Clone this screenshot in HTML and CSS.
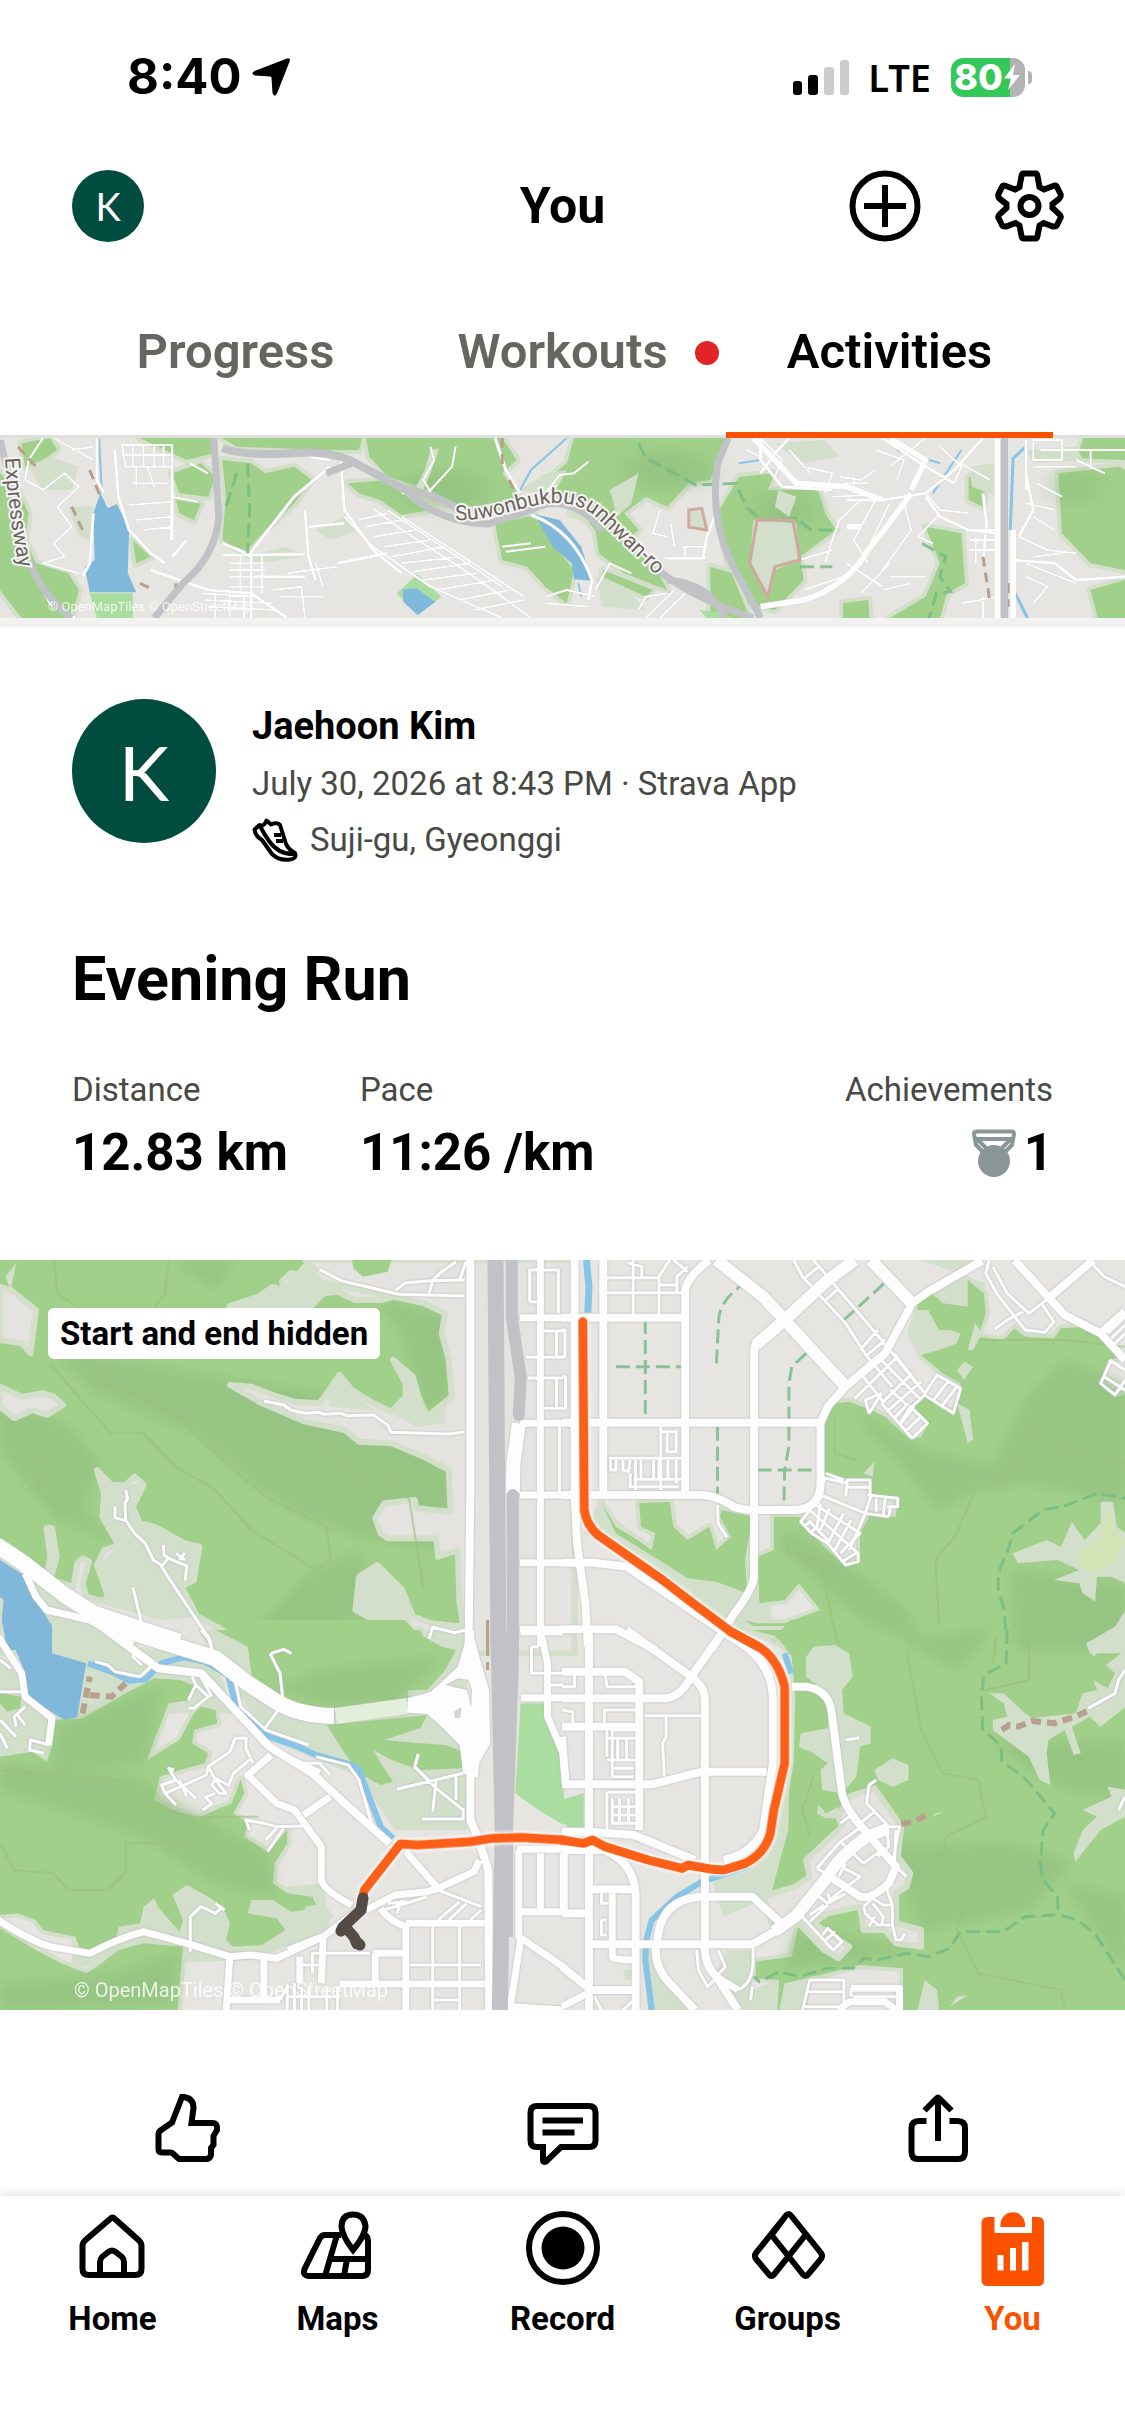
FILE: index.html
```html
<!DOCTYPE html>
<html lang="en">
<head>
    <meta charset="UTF-8">
    <meta name="viewport" content="width=device-width, initial-scale=1">
    <title>You</title>
    <link rel="stylesheet" href="styles.css">
</head>
<body>
<div class="status-bar">
    <div class="status-left">
        <span class="time">8:40</span>
        <svg class="location" viewBox="0 0 40 40"><path d="M36 1.500Q39.500 .5 38.800 4L26 36.500Q23.500 41 21.500 36L20.500 20.500Q20 19.500 19 19.500L4 18.500Q-1 17 3.500 14Z"/></svg>
    </div>
    <div class="status-right">
        <svg class="signal" viewBox="0 0 57 36">
            <rect x="0" y="22" width="9" height="14" rx="3"/>
            <rect x="15" y="16" width="10" height="20" rx="3"/>
            <rect class="off" x="31" y="8" width="10" height="28" rx="3"/>
            <rect class="off" x="47" y="1" width="9" height="35" rx="3"/>
        </svg>
        <span class="network">LTE</span>
        <div class="battery">
            <span>80</span>
            <svg viewBox="0 0 18 26"><path d="M12 0L1 14.500H8L5 26L17 11H10Z"/></svg>
        </div>
    </div>
</div>

<header class="top">
    <a class="avatar small" href="#">K</a>
    <h1>You</h1>
    <div class="top-actions">
        <button type="button" aria-label="Add">
            <svg class="icon" viewBox="0 0 72 72"><circle cx="36" cy="36" r="32.500"/><path d="M36 15V57M15 36H57"/></svg>
        </button>
        <button type="button" aria-label="Settings">
            <svg class="icon" viewBox="0 0 72 72">
                <path d="M30 3.500H43Q44 3.500 44.500 6L46.500 17L51 19.500L60 16Q63 15 64 17L67.500 24Q68.500 26.500 66 29L59.500 34V38L66 44Q68.500 46 67.500 48L64 55Q63 57 60 56.500L50.500 53L46.500 55.500L44.500 66Q44 68.500 43 68.500H30Q29 68.500 28.500 66L26.500 55.500L22.500 53L13 56.500Q10 57 9 55L5.500 48Q4.500 46 7 44L13.500 38V34L7 29Q4.500 27 5.500 24L9 17Q10 15 13 16L22 19.500L26.500 17L28.500 6Q29 3.500 30 3.500Z"/>
                <circle cx="36.500" cy="36" r="9"/>
            </svg>
        </button>
    </div>
</header>

<nav class="tabs">
    <a href="#">Progress</a>
    <a href="#"><span class="tab-label">Workouts<i class="dot"></i></span></a>
    <a class="active" href="#">Activities</a>
</nav>

<main>
    <!-- end of the previous activity -->
    <section class="map">
        <svg viewBox="0 0 1125 180" preserveAspectRatio="xMidYMid slice">
            <rect class="ground" width="1125" height="180"/>
            <g transform="translate(0 -8) scale(.7175 .3333)">
                <g class="forest">
                    <path d="M0 130L25 180 40 250 35 330 50 400 95 430 110 480 100 564H30L0 480Z"/>
                    <path d="M30 40L70 24 80 60 60 90 35 110Z"/>
                    <path d="M195 24H298V70L260 90 230 60Z"/>
                    <path d="M240 130L280 100 300 140 290 200 250 190ZM245 210L280 220 270 270 250 250Z"/>
                    <path d="M310 90L350 100 370 130 410 110 435 150 410 220 370 300 340 370 310 330 315 200Z"/>
                    <path d="M310 24H505L500 60 450 60 330 50Z"/>
                    <path d="M510 24H700L720 90 700 130 722 190 705 240 650 235 600 180 540 140 515 80Z"/>
                    <path d="M800 24H1010L1000 90 990 150 960 160 930 230 900 200 870 250 890 300 870 340 910 400 930 480 870 430 835 370 830 300 800 230 750 170 790 100Z"/>
                    <path d="M485 160L540 150 560 190 600 240 560 255 530 210 500 190Z"/>
                    <path d="M690 280L745 255 770 340 800 420 790 520 760 470 735 410 700 390Z"/>
                    <path d="M1030 140L1080 130 1070 180 1140 180 1150 250 1165 300 1115 380 1120 450 1080 540 1040 520 1015 400 1000 250Z"/>
                    <path d="M990 410L1020 430 1045 564H990Z"/>
                    <path d="M1290 290L1340 310 1345 460 1320 490 1310 564H1240L1290 500 1310 400Z"/>
                    <path d="M1475 130L1560 110 1568 120V420L1520 400 1480 310Z"/>
                    <path d="M1510 24H1568V90L1500 85Z"/>
                    <path d="M1175 520L1210 510 1212 564H1175ZM1350 140L1375 135 1370 230 1350 210ZM1520 480L1568 450V564H1530ZM185 330L210 380 190 400Z"/>
                    <path d="M840 420L910 480 900 500 840 440Z"/>
                </g>
                <g class="shade">
                    <ellipse cx="620" cy="180" rx="60" ry="60"/>
                    <ellipse cx="930" cy="120" rx="60" ry="60"/>
                    <ellipse cx="1090" cy="240" rx="40" ry="60"/>
                    <ellipse cx="1500" cy="170" rx="30" ry="50"/>
                </g>
                <path class="pale" d="M1050 270L1110 280 1112 390 1080 420 1070 500 1045 400ZM960 240L980 235 985 300 960 290ZM790 200L830 240 825 280 790 260ZM850 180L890 130 880 220 860 260ZM600 60L612 55 600 130 590 180 580 170 592 120ZM725 180L760 130 790 120 770 200ZM1085 180L1110 200 1100 260 1080 230ZM40 110L70 80 110 110 100 180 60 180ZM95 230L130 230 125 330 110 320Z"/>
                <path class="pale" d="M340 380L400 350 420 380 360 400ZM440 300L480 260 500 300 460 330ZM1080 40L1150 30 1170 80 1120 100ZM1350 110L1390 100V200L1355 170ZM1430 60L1500 50 1510 90 1440 100ZM830 440L870 470 900 540 840 530Z"/>
                <path class="grove" d="M582 432L615 500 582 556 553 490ZM125 490H185V564H135ZM975 540L1010 550 1020 564H985Z"/>
                <g class="lake">
                    <path d="M140 190L150 235 163 222 180 300 178 430 190 487H125L118 410 132 390 130 250Z"/>
                    <path d="M745 253L780 270 810 350 825 452 800 448 797 400 770 350Z"/>
                    <path d="M562 478L580 475 607 515 582 555 562 515Z"/>
                </g>
                <path class="stream w2" d="M138 24L142 190M790 24L740 120 725 180 720 200M806 460L810 500M1030 100L1060 90M1250 60L1310 100M1340 60L1300 190"/>
                <path class="stream w4" d="M1432 45L1412 85 1408 300M1408 460L1432 564"/>
                <g class="road">
                    <path class="w2" d="M60 24L40 90 35 150 60 180 90 130 110 170 80 230 100 290 75 340 90 380 60 400 110 430M75 24L130 90M100 60L130 50M170 45H240V110H175ZM185 45V110M200 45V110M215 45V110M228 45V110M170 75H240M190 110V170M205 110L215 170M185 160H235M180 225L240 215M190 270L240 260M240 110L238 330M200 300L240 290M265 100L290 130M240 200L275 215M600 50L605 90 590 150 600 185 560 190M635 50L630 110 600 180M820 95L800 130 780 135 760 190M310 375H420M320 400H370M320 420H370M320 440H370M320 470H370M335 375V480M350 375V564M365 375V490M280 490L360 500M285 510L380 520M290 530L385 540M300 490V564M320 490V564M340 490V564M380 480L420 470 425 564M390 500H450M400 430L470 410M440 400L450 470M480 260L520 350 600 470 700 564M520 235L560 300 640 410 700 500 740 564M500 270L540 250M510 290L560 270M520 320L580 300M535 350L600 330M545 380L620 350M560 400L640 380M575 425L655 400M590 450L665 430M610 480L690 450M640 510L710 480M660 540L730 510M540 240L700 470M560 260L730 500M700 350L740 340M705 365L760 350M760 500L790 480 830 500M760 520L820 530M830 480L850 400 880 430M890 540L900 500 930 490M900 564L940 480M920 564L955 490M920 240L910 310 930 320M935 280L940 350M925 385H985M950 350H985M955 350V385M1060 24L1090 90 1080 140M1040 60L1060 80M1100 60L1130 130M1120 110L1160 130 1150 190M1170 140L1200 150 1220 120M1175 160H1210M1190 140V190M1200 210L1170 270 1160 330 1150 400M1220 210L1190 330 1210 400M1240 220L1200 400M1290 190L1310 240 1350 250M1310 250L1280 320 1300 340M1260 220L1270 300 1230 420M1160 200L1210 195M1220 60L1260 90 1250 150M1290 24L1240 110M1310 50L1340 110 1330 160M1330 90L1380 150M1350 300H1390M1350 330H1390M1350 360H1390M1360 320V400M1440 30H1480V90H1440ZM1450 60H1568M1440 110H1500M1500 90L1540 130M1520 60V110M1445 160L1480 200M1430 220L1470 240M1440 260L1470 300M1420 320L1460 360 1500 370M1440 380L1480 370M1430 400L1500 460M1430 440L1460 470 1440 520M1370 500V564M1340 520L1390 500M1240 440L1290 440M1230 480L1270 460M1120 480L1190 430M1100 400L1160 360M1180 400L1230 470M1240 400L1200 490"/>
                    <path class="w4" d="M135 24V150L145 190M160 60L165 200 180 300 210 370 230 400M105 564L70 520 60 480M130 250L125 400 115 440M240 130V330M240 380L260 330M210 420L290 480 350 490 400 564M475 90L480 240 520 360 560 430M345 375L425 372M345 380L410 200 460 110M310 340L350 375V564M355 440H425M425 240L430 380 440 450M430 290L480 280M470 400L540 370M690 24L705 120 725 190M460 90L430 80M740 255Q800 300 825 450L820 510M930 385H980L985 320 1000 240M1100 24L1080 70 1060 130M1060 24L1060 90 1090 170 1160 180M1180 210L1230 210 1290 190 1330 120 1370 24M1230 24L1290 110 1330 160M1290 200L1310 260 1350 300 1390 310M1420 320L1440 240 1430 130M1410 390L1470 400 1500 450 1568 440M1430 30V180M1370 190L1375 280 1370 400"/>
                    <path class="w6" d="M1050 24L1080 90 1110 160 1180 170 1230 210M1270 190Q1240 280 1210 360Q1180 470 1120 510L1060 530M1180 290L1200 290M1240 24L1290 90 1270 180M1390 24V564M1412 300V564"/>
                </g>
                <path class="trail" d="M890 40L900 85 940 130 970 165 1025 160 1040 230 1060 270 1110 265 1130 300 1165 300M345 100L348 240 345 370M1285 340L1318 380 1310 440 1325 485 1305 490 1295 564M330 130L315 230M1115 410L1160 410"/>
                <path class="border" d="M1055 270L1105 270 1115 390 1080 410 1070 500 1045 400ZM960 240L978 235 985 300 960 292Z"/>
                <path class="dirt" d="M125 120L140 200M100 230L115 300M700 24V120M710 150L720 200M1370 380L1380 520M195 460L215 480M245 460V480M1405 460V530M25 50L50 110"/>
                <g class="motorway">
                    <path class="w8" d="M298 24L305 260Q300 380 255 460L215 564"/>
                    <path class="w10" d="M310 55Q340 80 420 68Q470 65 500 105L570 185"/>
                    <path class="w8" d="M455 130L490 100M568 185Q600 185 640 240M570 195Q620 280 680 282L740 240Q790 180 840 300"/>
                    <path class="w8" d="M915 415Q960 500 1050 564M930 450Q990 460 1010 564"/>
                    <path class="w8" d="M1015 24L1000 100Q990 250 1015 380L1060 564M40 390Q60 500 100 564M0 30L35 340"/>
                    <path class="w8" d="M1400 24V564"/>
                </g>
            </g>
            <path id="ring-road" d="M455 82C490 83 512 72 538 67C572 60 590 72 603 86L670 150" fill="none"/>
            <path id="expressway" d="M5 20Q8 75 20 135" fill="none"/>
            <text class="road-name"><textPath href="#ring-road">Suwonbukbusunhwan-ro</textPath></text>
            <text class="road-name"><textPath href="#expressway">Expressway</textPath></text>
        </svg>
        <small class="credit tiny">© OpenMapTiles © OpenStreetMap</small>
    </section>

    <article class="activity">
        <div class="athlete">
            <a class="avatar" href="#">K</a>
            <div class="athlete-info">
                <h2>Jaehoon Kim</h2>
                <p>July 30, 2026 at 8:43 PM · Strava App</p>
                <p class="place">
                    <svg class="shoe" viewBox="0 0 46 44">
                        <path d="M2.500 11.500L7.500 7Q12 9 14.500 2.500L19 6.500Q25 4 28 7L34 26Q37 32 43 35Q45 41 38 41.500Q27 43 20 36L10 22Q3 18 2.500 11.500Z"/>
                        <path d="M8 8Q12 16 17 23Q27 37 43 36M22 17H29M24 23H31"/>
                    </svg>
                    Suji-gu, Gyeonggi
                </p>
            </div>
        </div>
        <h3>Evening Run</h3>
        <dl class="stats">
            <div>
                <dt>Distance</dt>
                <dd>12.83 km</dd>
            </div>
            <div>
                <dt>Pace</dt>
                <dd>11:26 /km</dd>
            </div>
            <div class="achievements">
                <dt>Achievements</dt>
                <dd>
                    <svg class="medal" viewBox="0 0 44 48">
                        <path d="M4 2.500H40Q42 3 42 5L40 16L31 25M4 2.500Q2 3 2 5L4 16L13 25M3 10H41M6 11L17 22M38 11L27 22"/>
                        <circle cx="22" cy="32" r="16"/>
                    </svg>
                    1
                </dd>
            </div>
        </dl>
    </article>

    <section class="map">
        <svg viewBox="0 0 1125 750">
            <rect class="ground" width="1125" height="750"/>

            <!-- land cover, one group per tile -->
            <g transform="translate(0 -10) scale(.35906 .33333)">
                <rect class="wood" width="1568" height="1150"/>
                <g class="shade">
                    <path d="M150 300L600 380 900 430 1250 600 1250 900 1000 860 850 800 700 700 560 560 250 420Z"/>
                    <path d="M0 470L180 520 280 640 230 780 330 880 150 800 0 600Z"/>
                    <path d="M480 30L650 30 600 120Z"/>
                    <path d="M1050 150L1250 200 1250 450 1180 480 1120 250Z"/>
                    <path d="M850 980L1000 900 1050 1100 900 1150 700 1150Z"/>
                </g>
                <g class="town">
                    <path d="M850 30L880 60 850 75 810 70 785 95 795 125 760 110 720 140 640 168 830 170 870 165 900 130 940 125 990 150 1060 150 1100 140 1180 160 1240 190 1230 250 1250 330 1258 440 1190 500 1165 440 1150 380 1095 330 1130 400 1130 440 1090 485 1040 460 980 420 945 375 910 430 890 460 820 455 760 435 700 410 640 405 730 460 850 515 960 540 1000 575 1090 580 1180 620 1250 660 1255 785 1160 775 1155 750 1070 760 1045 805 1060 850 1080 865 1215 865 1220 920 1275 900 1280 1060 1290 1130 1200 1120 1150 1100 1120 1020 1050 945 1000 980 990 1080 1040 1110 1150 1150 1200 1210H1600V30Z"/>
                    <path d="M0 110L30 120 100 180 85 310 60 280 0 270Z"/>
                    <path d="M0 410L60 440 120 430 150 440 175 465 130 495 90 480 40 505 0 470Z"/>
                    <path d="M270 660L310 705 350 705 375 680 400 705 370 770 390 820 430 830 515 880 555 890 540 990 505 1010 550 1100 640 1150 700 1210H0V930L80 970 130 980 140 920 130 835 145 835 158 920 140 990 205 1010 215 940 230 925 248 935 230 1000 240 1040 290 1055 300 1035 270 945 290 900 330 885 285 800 290 730Z"/>
                </g>
                <path class="pale" d="M1050 950L1000 985 995 1080 1040 1105 1150 1145 1140 1090 1110 1020ZM945 380L910 440 920 470 1040 480 980 425ZM850 35L790 110 640 165 830 165 960 120 1240 180 1100 130 900 90ZM1100 335L1140 400 1130 460 1090 490 1160 530 1240 520 1240 460 1190 500 1160 390Z"/>
                <path class="pale" d="M280 670L310 710 395 700 375 770 390 820 550 890 540 990 505 1010 550 1100 450 1110 240 1050 300 1040 280 940 335 885 290 800ZM45 40L15 80 30 120ZM70 980L240 1080 400 1140 380 1200 150 1200Z"/>
                <path class="wood" d="M980 30H1090L1080 65 1010 80 985 55Z"/>
            </g>
            <g transform="translate(0 370) scale(.35906 .33333)">
                <path class="pale" d="M550 0H1300V600H1100L1000 440 750 330 640 150ZM0 80L70 130 140 260 150 400 0 400ZM140 20L600 80 650 250 400 250 150 270ZM200 780L560 740 700 780 900 760 920 900 700 990 200 1010Z"/>
                <g class="forest">
                    <path d="M600 0L690 50 705 170 760 210 860 225 930 240 1140 215 1135 180 1190 180 1240 120 1270 60 1230 50 1180 20 1170 0Z"/>
                    <path d="M910 285L1190 255 1170 295 1070 330 1170 340 1240 345 1290 365V415L1170 420 1090 390 1040 360 1060 400 1095 455 1060 465 1000 430 960 370Z"/>
                    <path d="M0 380L90 365 130 395 145 350 140 270 230 265 350 190 430 145 500 150 550 170 530 210 470 220 430 330 410 390 500 330 540 250 560 230 600 240 605 280 540 300 535 340 580 370 570 400 500 420 445 440 430 510 480 540 550 565 600 540 645 520 670 450 680 490 650 550 690 580 680 620 745 665 800 600V640L765 700 760 760 800 790 870 800 885 835 810 845 760 810 700 810 690 850 770 865 795 900 730 945 650 950 630 930 640 880 620 830 580 800 520 765 480 795 510 870 500 905 440 830 430 805 400 830 390 880 330 890 325 920 250 960 220 950 210 920 120 900 100 870 50 850 0 855Z"/>
                    <path d="M0 895L100 960 170 1000 240 1030 270 1010 330 960 400 940 510 950 500 1060 495 1140H0Z"/>
                    <path d="M0 190L60 200 55 235 20 245 0 220Z"/>
                </g>
                <g class="shade">
                    <path d="M0 400L380 440 620 600 750 680 760 800 600 760 400 620 150 530 0 480Z"/>
                    <path d="M0 1060L300 1040 500 960 480 1120 0 1140Z"/>
                    <path d="M150 300L450 170 400 400 150 420Z"/>
                    <path d="M760 180L900 120 1230 80 1100 220 900 220Z"/>
                </g>
                <path class="pale" d="M850 830L900 820 930 860 890 900 850 890ZM500 800L530 770 570 830 540 860Z"/>
                <path class="grove" d="M1450 220H1515L1520 270 1570 380V585L1500 540 1435 490Z"/>
            </g>
            <g transform="translate(562 -10) scale(.35906 .33333)">
                <path class="pale" d="M1000 30H1150L1000 130 960 250 1000 330 1120 400 1160 300 1180 100ZM60 850L500 1150 600 1180 560 960 250 900 100 760Z"/>
                <g class="forest">
                    <path d="M730 520L760 460 800 455 860 480 900 500 970 570 1000 560 1020 520 980 470 1010 440 1090 490 1110 440V400L1060 370 1000 315 1050 300 1100 280 1110 250 1080 240 1050 240 1020 180 990 180 990 160 1030 130 1060 160 1130 170V90L1175 130 1180 190 1160 260 1230 270 1260 235 1290 260 1370 265 1390 235 1470 230 1520 270 1560 320 1520 330 1500 400 1550 440 1570 430V1205H650L570 1160 510 1110 540 1120 620 1120 720 1080 690 1040 660 1000 620 1050 550 1060 545 920 590 900V800H660L730 890 790 950 830 920V850L860 790 930 800 935 750 860 730V690L730 680Z"/>
                    <path d="M110 760L150 830 210 870 250 900 260 850 220 830 215 760 300 755 310 830 350 870 410 830 430 900 470 860 440 800 445 780 530 800 510 930 515 1030 430 995 350 985 270 930 150 850Z"/>
                </g>
            </g>
            <g transform="translate(562 370) scale(.35906 .33333)">
                <g class="forest">
                    <path d="M530 0L600 20 640 80 650 200 645 400 630 500 630 600 600 680 580 740 575 800 620 770 660 880 640 980 540 995 540 1045 605 1050 600 1140H665L690 1040 720 1035 830 1005 950 1015V1140H1570V0Z"/>
                </g>
            </g>
            <!-- join the woods across the tile edge -->
            <path class="wood" d="M212 360H405L424 382H246ZM790 360H1125V390H797L775 378Z"/>
            <g transform="translate(562 -10) scale(.35906 .33333)">
                <g class="shade">
                    <path d="M800 470L1000 600 1200 650 1290 450 1400 330 1568 400V760L1300 700 1150 720 1050 780 950 650Z"/>
                    <path d="M620 840L760 920 960 1080 1000 1180 850 1120 700 980 620 900Z"/>
                    <path d="M1250 960L1568 1000V1200H1260Z"/>
                </g>
                <path class="pale" d="M1255 910L1350 870 1390 890 1420 815 1455 870 1500 820V755H1535L1545 830 1570 850V1000L1530 980 1490 980 1485 1055 1450 1030 1440 1000 1370 990 1440 960 1380 930 1270 940ZM1570 1080L1540 1130 1460 1180 1470 1210H1570ZM1130 300L1150 220 1170 250 1145 300ZM1100 360L1120 335 1145 350 1120 390ZM1100 460L1135 480 1145 570 1130 580ZM840 670L870 635 865 680Z"/>
                <path class="meadow" d="M1440 900L1500 870 1510 790 1530 780 1540 850 1570 870 1540 940 1480 970 1440 950Z"/>
            </g>
            <g transform="translate(562 370) scale(.35906 .33333)">
                <g class="shade">
                    <path d="M850 650L1250 640 1420 700 1300 840 1000 900 960 780Z"/>
                    <path d="M1200 340L1568 330V500L1400 480Z"/>
                    <path d="M650 900L1000 960 800 990 620 1020Z"/>
                    <path d="M1400 760L1568 800V1030L1500 920Z"/>
                    <path d="M950 30L1200 0 1100 120Z"/>
                </g>
                <g class="town">
                    <path d="M720 650L780 590 770 560 800 500 870 475 900 520 945 590 935 680 970 730 960 770 930 790V880L1000 900V950L930 940 900 900 840 900 830 830 740 850 700 880 800 950 770 985 730 960 660 880 590 900 560 800 650 770 690 740 680 690Z"/>
                </g>
                <path class="pale" d="M680 80L700 50 760 45 800 70 810 140 780 180 785 250 860 290V340L830 350 820 440 780 490 725 480 720 420 740 400 700 370 660 350 665 310 740 295 750 200 680 140ZM870 420L920 385 965 405V450L920 470 880 450ZM715 525L735 550 770 530V565L735 565 710 550ZM640 80L630 600 600 720 580 800 450 860 420 760 560 660 610 500ZM1040 550L1065 545 1030 560ZM620 1060L700 1040 680 1140H605ZM1010 1050L1045 1080 1050 1140H990ZM1080 1130L1100 1100 1130 1095Z"/>
                <path class="pale" d="M1190 190H1230L1290 250 1310 265 1430 250 1450 190 1490 180 1480 150 1520 175 1540 130 1515 105 1570 60V230L1500 290 1470 260 1420 290 1445 370 1425 375 1400 300 1355 330 1350 370 1360 465 1330 450 1300 380 1250 340 1200 300V270L1240 260 1230 220ZM1450 540L1530 500 1520 470 1570 480V560L1500 600 1430 695 1425 670 1450 600 1490 560ZM1460 40L1550 0H1568L1480 80Z"/>
                <path class="pale" d="M460 960L530 960 530 1080 600 1050V1140H500L420 1050ZM170 1020H200V1050H175ZM220 960L260 960 300 1070 370 1140H240Z"/>
                <path class="grove" d="M-4 510L60 490V600H30L-4 575Z"/>
            </g>

            <!-- water -->
            <g transform="translate(0 -10) scale(.35906 .33333)">
                <path class="lake" d="M0 930L65 975 145 1130V1200H20L5 1110 10 1050 0 1040Z"/>
            </g>
            <g transform="translate(0 370) scale(.35906 .33333)">
                <path class="lake" d="M18 -20H143L145 70 240 100 215 262 180 270 75 200 70 130 40 50Z"/>
                <path class="stream w6" d="M245 100L310 125 360 152 405 148 450 100 510 82 570 95 635 135 660 240 750 320 830 350 880 375 980 405 1000 420 1060 590 1095 625"/>
            </g>
            <g transform="translate(562 -10) scale(.35906 .33333)">
                <path class="stream w8" d="M68 30L75 110 72 188"/>
            </g>
            <g transform="translate(562 370) scale(.35906 .33333)">
                <path class="stream w6" d="M250 1140L232 990 235 930 250 870 320 800 390 755 520 710M620 70L638 130"/>
            </g>

            <!-- footpaths and tracks -->
            <g transform="translate(562 -10) scale(.35906 .33333)">
                <path class="trail" d="M232 210V515M150 350H335M430 340L437 200Q445 150 495 110M680 310L640 350 632 400V590L620 660 618 770M433 530V735M545 660H710M785 210L900 97M1235 1140L1232 1080 1215 1020V970L1245 890 1255 850 1340 780 1400 768 1490 730 1568 745"/>
                <path class="contour" d="M760 500V610L820 630M1330 470L1290 600 1230 690 1150 720 1100 850 1040 930 1050 1130M1360 470L1370 560 1440 610 1568 640M620 850L630 910 720 930 750 1100 770 1180M1160 270L1400 270 1568 290"/>
            </g>
            <g transform="translate(562 370) scale(.35906 .33333)">
                <path class="trail" d="M1240 0L1237 100 1175 135 1168 200 1172 300 1222 345 1225 395 1285 440 1372 550 1340 600 1332 700 1340 750 1380 800 1382 855M1568 1050L1490 920Q1440 860 1380 855L1290 860 1230 905H1110L1080 955 1020 980 960 970 880 990 840 985 810 1015H740L660 1040 605 1025 550 1055 535 1040"/>
                <path class="dirt thick" d="M1225 300L1245 285 1270 290 1310 273 1370 280 1430 260 1468 240M945 582L980 575 1015 555"/>
                <path class="contour" d="M960 60L1000 300 1060 430 1160 450 1180 560 1070 620 1060 700 1140 790 1100 900 1160 1030 1390 1080 1400 1140M700 440L670 540 690 620M1210 20L1200 100M1300 30V150L1180 180"/>
            </g>
            <g transform="translate(0 -10) scale(.35906 .33333)">
                <path class="contour" d="M150 30L160 130 240 190 210 270M470 30L460 130 430 170M140 340L250 480 310 550 400 550 490 650 600 720 700 840 880 960 920 930 910 830 740 740 630 640 540 550 500 500 380 430 300 410 280 340M150 620L100 720 70 690 90 620 150 620M700 470L800 550 920 590 1000 690 1100 690 1140 750 1180 1020"/>
                <path class="dirt" d="M1358 1110V1200"/>
            </g>
            <g transform="translate(0 370) scale(.35906 .33333)">
                <path class="contour" d="M0 420L330 450 380 520 540 560 720 560M0 640L40 720 150 730 190 780 300 780 350 730V640L540 640 545 610"/>
                <path class="dirt thick" d="M230 250L250 140M250 195L310 200 350 160"/>
                <path class="dirt" d="M1358 0V120"/>
            </g>

            <!-- streets -->
            <g class="road">
                <g transform="translate(0 -10) scale(.35906 .33333)">
                    <path class="w4" d="M890 58L950 92 1050 118 1110 133 1295 138M1100 122L1130 98 1200 92 1295 90M1195 130L1205 92 1230 65 1270 35M1280 90L1298 35M735 453L790 465 810 480 850 490 890 487 900 493 950 490 965 497 1040 495 1080 525 1090 547 1250 552 1295 545M350 720L355 745 348 760 350 810 375 850 405 880 427 930 445 942 480 1000 560 1130 580 1160 590 1200M320 770V803L350 812M455 885L457 915 470 925 520 948 516 992M450 950L470 922M490 910L515 930M515 908L500 930M370 1012L392 1110 388 1135M1195 1167L1205 1132 1265 1148 1300 1140M1475 155V60H1555V190M1475 155H1495M1510 243H1568M1465 322H1568M1470 384H1568M1515 475H1568M1550 243V320M1550 384V475M1558 520V740"/>
                    <path class="w8" d="M1505 30V1190M1448 203H1568M1448 520H1568M1448 735H1568M1448 938H1568M1448 1138H1568M70 970L100 1040 130 1080 250 1110 370 1185"/>
                    <path class="w10" d="M1310 30V700L1305 1190"/>
                    <path class="w16" d="M-10 885L60 935 180 1035 260 1090 400 1140 500 1175"/>
                    <path class="w14" d="M1445 520L1430 640 1428 730"/>
                </g>
                <g transform="translate(562 -10) scale(.35906 .33333)">
                    <path class="w4" d="M125 83H270M125 128H335M198 30V200M182 38L222 50V80M270 203V80L300 30M270 105H320M320 125V80L350 50M310 30L350 65M0 240H8V320H-10M0 380H10V475H0M645 30L670 80 790 220 850 320 920 410M700 30L890 270 1010 430M675 85L715 50M735 150L770 115M830 300L880 240M845 320L900 270M815 445L935 320M855 490L845 450 890 430M890 430L855 490M890 460L975 370M905 485L1000 395M940 525L980 470M975 565L1018 520 970 470 940 525M1010 430L1045 375 1110 415 1090 490 1010 435 970 475M890 460L975 565M835 375L895 455M880 320L1000 450M915 420L960 465M1060 465L1100 410M1035 450L1075 395M925 310L1010 430M925 505L965 460M955 545L1000 500M1190 30L1180 70 1210 130 1290 240 1345 247 1370 215 1335 160M1200 50L1240 130 1300 190 1355 145M1205 237L1240 210 1285 185M1480 45L1510 80 1568 110M1520 250L1568 200M1530 265L1568 225M1540 280L1568 250M1530 330L1500 400 1540 435 1568 390M1525 330L1568 360M1510 380L1568 420M130 625H335M275 530V720M275 545H318V605H293V550M135 630V660H150V630M170 630V660L185 665 190 630M205 630V720M220 630V685M255 630V685M270 630V685M295 630V685M318 630V700M190 670V710H325M200 688H335M433 765L435 820 460 862"/>
                    <path class="w4" d="M735 670L785 690M735 685L795 700M790 690H858V735M795 712H858M795 690L790 740M735 680L690 780 665 815 695 850 740 880 790 945 825 935 825 910M690 780L825 910M720 735L845 790 910 800M850 735L935 745V770L905 770M860 740L845 790 800 900M875 745V785M900 745L895 795M915 770L910 800M715 850L745 775M740 880L785 790M775 910L830 850 805 830M675 830L690 815 740 870M700 760L830 850M710 835L720 760M760 900L805 810M690 850L710 830M780 935L825 905"/>
                    <path class="w10" d="M35 30V740L42 880 65 1060 72 1190M115 30V735M0 203H340M0 518H725M0 735H390Q430 735 480 772L520 780H650Q720 775 720 700V520L740 470 790 410 900 310 975 160 1020 125 1170 32M343 735V120Q350 80 410 30M535 320V980Q530 1020 480 1090L415 1200M540 280Q535 290 535 320M0 938H90L180 950 470 1160M0 1138H150L260 1200M1260 30L1400 195 1500 250 1568 330M1355 145L1480 30M1500 250L1568 185"/>
                    <path class="w12" d="M430 30L560 140 620 210 790 410M815 30L730 100 650 180 620 210 540 285M860 30L975 160"/>
                </g>
                <g transform="translate(0 370) scale(.35906 .33333)">
                    <path class="w4" d="M1205 890V1140M1280 890V1140M1140 1005H1340M1205 1110H1280M840 1005H895M800 955L895 915M870 1030V970H1030M800 1060V1140M820 1060V1140M840 1070V1140M860 1070V1140M910 1070V1140M940 1070V1140M800 1100H945M780 1110L800 1070M530 965V860L560 830 600 850 620 830M600 820L625 840M1220 870L1280 815M1250 870L1300 820M1310 870L1340 840M1220 780L1340 830M1070 840L1190 800M1080 820L1150 815M1105 850L1120 810M755 70L790 58 812 70M752 70L780 130 788 210M735 300L775 240M655 150L670 230 740 300 860 345M560 0L585 30 595 80M265 95L300 105 320 125 390 140 430 100M375 50L370 80 395 105M535 140L545 165 525 210M545 165L580 200 540 235 525 235M560 140L590 200M880 380L970 405 1000 450 1040 600M830 400H890L920 435M690 325H655L640 365 580 410 575 435 545 450 460 490 450 465 490 450 470 415 485 420M460 490L490 525M490 450L545 505M500 450L520 500M580 410L600 450 630 490 610 490 590 465 600 445 635 465M700 385L650 430 635 470M685 325V355L705 400M570 500L590 520 565 540M575 500L600 490M695 600L685 570 735 580 770 590 845 588M745 665L790 595M740 630L770 595M1105 478L1290 430M1165 372L1155 410 1215 475 1290 540M1215 450L1205 545M1270 440V510M1175 567H1290V535M138 345L85 330 82 360 122 370M0 270L45 320M0 310L20 355M45 250L70 285M70 230L40 260 45 290M0 90L30 115M0 185H60M1480 50V130H1568M1480 50H1500M1530 165H1568"/>
                    <path class="w8" d="M-5 20L60 130 70 200 145 265 135 345M755 375L690 435 770 520 820 540 895 650V750Q900 780 980 825M845 555L920 500M-5 870Q80 930 140 950L250 970Q330 925 400 905L520 940 640 980 700 975 770 985 900 920 1010 830M1220 775L1320 725 1335 690M1020 840L1100 795 1190 785 1220 775M1130 665L1220 775M1060 835Q1080 870 1130 890V1140M1130 880H1350M945 1062H1350M1040 970H1130M1045 970V1060M900 920L895 1060M640 980L630 1140M735 985V1110H780M835 980V1060M630 1110H730M1505 0L1525 100V260L1568 370M1450 5H1568M1450 203H1568M1440 658H1568M1445 660V920L1568 1010M1505 670V845M1450 845H1568M1450 930L1420 1140M1430 1130L1568 1140"/>
                    <path class="w10" d="M290 -5L440 115 560 130 625 205 750 350 870 430 960 520 1085 640M800 385L890 430M1310 0L1305 60M1310 420V570L1330 620 1360 720 1362 1140"/>
                    <path class="w16" d="M280 -25L450 35 600 85 690 160 770 215Q830 255 930 258"/>
                    <path class="tunnel" d="M935 258L1135 228"/>
                    <path class="junction" d="M1135 205L1200 185 1275 110 1300 20 1320 20 1340 100 1362 180 1365 340 1335 400 1330 445 1290 430 1280 345 1230 290 1190 252 1135 248ZM1240 165L1275 145 1305 150 1315 180 1312 230 1300 180ZM1265 245L1285 232 1282 262 1268 265Z"/>
                </g>
                <g transform="translate(562 370) scale(.35906 .33333)">
                    <path class="w4" d="M230 257H388M290 260V320L280 340 285 440M135 300H205M125 325H205M125 390H205M140 300V440H200M155 325V390M180 325V390M145 415H200M125 300V380M125 485V600M125 487H210M140 505V580H205M160 505V575M185 505V575M140 530H205M140 555H205M118 290V240H205M120 130L125 170H210M0 240L30 245V285M35 135V170H0M875 450L855 465 848 520 910 590H940L920 700 960 740M775 580L800 560M710 715L775 635 835 590M710 715L735 730M775 635L840 700M840 700L890 660M830 580L870 545M905 600L910 650 880 680M930 600L925 720 905 780 920 825V885L930 930 945 930 955 910M840 830L845 850 880 885H915M840 830L865 805 895 825 920 825M865 820L895 860 890 885M855 890L870 860M660 850L755 960 780 935 740 895 725 915M735 930L760 905M690 855L730 825M690 875L740 825M710 795L740 820 790 790M760 700L830 740 745 810 740 790M790 700L770 740M375 960L380 1020 405 1070 430 1045M435 960L455 1010 430 1040M532 950V1000Q530 1060 490 1080M690 1050H785V1140M690 1050L670 1140M680 1085H785M670 1130H770M810 1100H930M805 1075V1100M525 1110L530 1070M790 330L828 323M1465 235L1540 190 1550 150 1568 120M1550 540L1568 500M110 790V820H130M125 870H110V915H125M90 1100L110 1140M170 1140L200 1110"/>
                    <path class="w8" d="M140 790V980Q142 990 200 990M805 1075H940V1140M770 1140L800 1115H900L930 1140M0 1130L80 1085M490 1080L430 1040"/>
                    <path class="w10" d="M75 -10V1140M0 125H175L215 155V600M0 205H290Q330 200 360 140L445 10M180 0L360 140Q398 170 398 210V960Q400 1010 430 1040L490 1140M0 290H215M0 463H250L390 425H570M470 20Q585 90 587 200V400L560 600Q530 670 450 690M0 605H80L200 615 370 690M0 660H120Q200 700 205 790V1140M85 778H205M85 943H530L600 900M265 943Q270 800 400 800H530L610 880M262 943Q255 1010 300 1060L370 1140M0 850H65M5 670V850M0 320L10 460M0 1010L80 1080H200M640 170H680Q740 180 750 240L780 490Q790 540 850 610L930 710 910 760Q860 810 830 800L740 735"/>
                    <path class="w12" d="M590 905L650 860 740 740Q770 680 850 620L910 595"/>
                </g>
            </g>
            <g class="motorway">
                <g transform="translate(0 -10) scale(.35906 .33333)">
                    <path class="w16" d="M1380 30L1388 1180"/>
                    <path class="w12 round" d="M1425 20V200L1450 380 1445 495M1428 735V1200"/>
                </g>
                <g transform="translate(0 370) scale(.35906 .33333)">
                    <path class="w16" d="M1388 0L1400 600 1392 1140"/>
                    <path class="w12" d="M1428 0V120L1412 600 1412 920"/>
                </g>
            </g>

            <!-- recorded route, the hidden end is dark -->
            <g id="route">
                <path transform="translate(562 -10) scale(.35906 .33333)" d="M58 215L60 515 62 780Q68 825 100 855L200 930 280 990 340 1040 470 1145 545 1190"/>
                <path transform="translate(562 370) scale(.35906 .33333)" d="M470 5L540 45Q600 80 620 170V400L590 540 580 610Q565 670 510 700L450 720 420 718 350 705 335 715 240 690 120 650 85 630 60 640 0 630"/>
                <path transform="translate(0 370) scale(.35906 .33333)" d="M1568 630L1450 622 1370 625 1310 635 1165 645 1115 642 1015 780 1010 800"/>
            </g>
            <path class="hidden-part" d="M363 638L361 650 343 667 341 671M347 669L354 677 357 684M357 682L360 685"/>
        </svg>
        <span class="privacy">Start and end hidden</span>
        <small class="credit">© OpenMapTiles © OpenStreetMap</small>
    </section>

    <div class="reactions">
        <button type="button" aria-label="Give kudos">
            <svg class="icon" viewBox="0 0 78 78"><path d="M33 8L23 33.500L11.500 41.500Q9.500 43 9.500 45.500V60Q9.500 63.500 13 63.500H21.500Q23 63.500 24.500 65L30 70H57Q61 70 62 66V59L64.500 56V47L68 41Q69 34 63.500 34H42.500L44.500 19Q44.500 9.500 35 8Z"/></svg>
        </button>
        <button type="button" aria-label="Comment">
            <svg class="icon" viewBox="0 0 78 78"><path d="M13 17H65Q71.500 17 71.500 23.500V51.500Q71.500 58 65 58H37L22 72.500Q19 74 19 71V58H13Q6.500 58 6.500 51.500V23.500Q6.500 17 13 17ZM18.500 31.500H59M18.500 43.500H50.500"/></svg>
        </button>
        <button type="button" aria-label="Share">
            <svg class="icon" viewBox="0 0 78 78"><path d="M27.500 32H20Q12.500 32 12.500 39V63Q12.500 70 19 70H59Q66 70 66 63V39Q66 32 58.500 32H50.500M39 52V10M25.500 21.500L37.500 9.500Q39 8 40.500 9.500L52.500 21.500"/></svg>
        </button>
    </div>
</main>

<nav class="tab-bar">
    <a href="#">
        <svg class="icon" viewBox="0 0 78 78"><path d="M36 10Q38.500 7.500 41 10L65 31.500Q67.500 34 67.500 37V60Q67.500 66 61 66H15Q8.500 66 8.500 60V37Q8.500 34 11 31.500ZM26 66V53Q26 50 28 48L35 42.500Q38 40.500 41 42.500L48 48Q50 50 50 53V66"/></svg>
        Home
    </a>
    <a href="#">
        <svg class="icon" viewBox="0 0 78 78"><path d="M42 26H26Q23 26 21 29L5.500 60Q3.500 67 10 67H63Q69 67 69 61V32Q69 28 66 26M38 26L26 67M30 50H69M48 50L45 67M54 41Q42.500 26 42.500 17Q43 5.500 54 5.500T66.500 17Q66.500 26 54 41Z"/></svg>
        Maps
    </a>
    <a href="#">
        <svg class="icon" viewBox="0 0 78 78"><circle cx="39" cy="39" r="34"/><circle class="solid" cx="39" cy="39" r="21.500"/></svg>
        Record
    </a>
    <a href="#">
        <svg class="icon" viewBox="0 0 78 78"><path d="M37 6.500L7 44Q5 47 7 50L20 65.500Q22.500 68.500 25 65.500L56.500 26M22.500 26L54 65.500Q56.500 68.500 59 65.500L72 50Q74 47 72 44L42 6.500Q39.500 3.500 37 6.500Z"/></svg>
        Groups
    </a>
    <a class="active" href="#">
        <svg class="icon" viewBox="0 0 78 78">
            <path class="solid" fill-rule="evenodd" d="M14 8H20.500V24H58V8H64Q70 8 70 14V71Q70 77 64 77H14Q7.500 77 7.500 71V14Q7.500 8 14 8ZM23.500 46V61.500H29.500V46ZM36 39V61.500H42V39ZM48 33V61.500H54.500V33ZM26.500 18V14.500A12.300 12.500 0 0 1 51 14.500V18Z"/>
        </svg>
        You
    </a>
</nav>
</body>
</html>
```

FILE: styles.css
```css
*{
    box-sizing: border-box;
    margin: 0;
    padding: 0;
}

body{
    font-family: Roboto, "Noto Sans", sans-serif;
    color: #000000;
    background: #ffffff;
}

a{
    color: inherit;
    text-decoration: none;
}
button{
    display: block;
    border: none;
    background: none;
    font: inherit;
    cursor: pointer;
}
svg{display: block}

.icon{
    width: 78px;
    height: 78px;
    fill: none;
    stroke: currentColor;
    stroke-width: 6;
}
.icon .solid{
    fill: currentColor;
    stroke: none;
}

/* status bar */
.status-bar{
    display: flex;
    justify-content: space-between;
    padding: 47px 93px 0 127px;
    line-height: 60px;
    font-family: Inter, sans-serif;
}
.status-left,
.status-right{
    display: flex;
    align-items: center;
}
.status-left{gap: 10px}
.time{
    font-size: 49px;
    font-weight: 700;
}
.location{
    width: 40px;
    height: 40px;
}
.signal{
    width: 57px;
    height: 36px;
}
.signal .off{fill: #cccccc}
.network{
    margin: 0 20px 0 18px;
    font-family: "Noto Sans", sans-serif;
    font-size: 38px;
    font-weight: 600;
}
.battery{
    position: relative;
    display: flex;
    align-items: center;
    width: 74px;
    height: 39px;
    margin-right: 7px;
    padding-left: 3px;
    border-radius: 12px;
    background: linear-gradient(90deg, #34c759 80%, #b3b3b3 80%);
    color: #ffffff;
    font-size: 36px;
    font-weight: 800;
}
.battery svg{
    width: 18px;
    height: 26px;
    fill: #ffffff;
}
.battery::after{
    content: "";
    position: absolute;
    left: 77px;
    top: 13px;
    width: 4px;
    height: 13px;
    border-radius: 0 6px 6px 0;
    background: #b3b3b3;
}

/* header */
.top{
    display: grid;
    grid-template-columns: 1fr auto 1fr;
    align-items: center;
    padding: 63px 60px 0;
}
.top h1{
    font-size: 50px;
    line-height: 60px;
}
.top .icon{
    width: 72px;
    height: 72px;
}
.top-actions{
    display: flex;
    justify-content: flex-end;
    gap: 72px;
}
.avatar{
    display: flex;
    align-items: center;
    justify-content: center;
    flex: none;
    width: 144px;
    height: 144px;
    border-radius: 50%;
    background: #004d40;
    color: #ffffff;
    font-family: Lato, sans-serif;
    font-size: 76px;
}
.avatar.small{
    width: 72px;
    height: 72px;
    margin-left: 12px;
    font-size: 38px;
}

.tabs{
    display: flex;
    padding: 0 72px;
    border-bottom: 3px solid #dfdfdd;
}
.tabs > a{
    flex: 1;
    margin-bottom: -3px;
    padding: 80px 0 50px;
    border-bottom: 6px solid transparent;
    color: #666660;
    font-size: 49px;
    font-weight: 600;
    line-height: 60px;
    text-align: center;
}
.tabs > a.active{
    border-color: #fc5200;
    color: #000000;
}
.tab-label{position: relative}
.dot{
    position: absolute;
    right: -51px;
    top: 18px;
    width: 24px;
    height: 24px;
    border-radius: 50%;
    background: #e02428;
}

/* maps */
.map{
    position: relative;
    overflow: hidden;
}
.map > svg{
    width: 100%;
    height: auto;
}
.map path{
    vector-effect: non-scaling-stroke;
}
.ground{fill: #e6e5e1}
.wood{fill: #a0d08a}
.forest{
    fill: #a0d08a;
    stroke: #d3dfcb;
    stroke-width: 8px;
    stroke-linejoin: round;
    paint-order: stroke;
}
.town{
    fill: #e4e3df;
    stroke: #d3dfcb;
    stroke-width: 6px;
    stroke-linejoin: round;
}
.shade{
    fill: #8fbb7c;
    opacity: .55;
    filter: blur(18px);
}
.pale{fill: #d2dfca}
.meadow{fill: #d2e3b6}
.grove{fill: #aadda0}
.lake{fill: #7fb8da}
.stream{
    fill: none;
    stroke: #86c4e8;
}
.trail,
.dirt,
.border,
.contour{
    fill: none;
    stroke: #74ba83;
    stroke-width: 3px;
    stroke-dasharray: 14 6;
}
.trail{opacity: .8}
.dirt{
    stroke: #b7a08d;
    stroke-dasharray: 10 6;
}
.dirt.thick{stroke-width: 6px}
.border{
    stroke: #cfa9a0;
    stroke-dasharray: none;
}
.contour{
    stroke: #9cbf7c;
    stroke-width: 2px;
    stroke-dasharray: none;
    opacity: .6;
}
.road{
    fill: none;
    stroke: #fdfdfd;
    stroke-linejoin: round;
    filter: drop-shadow(0 0 1px #b4b4be);
}
.road .tunnel{
    stroke: #e2efdb;
    stroke-width: 16px;
}
.road .junction{
    fill: #fdfdfd;
    fill-rule: evenodd;
    stroke: none;
}
.motorway{
    fill: none;
    stroke: #c0c2c5;
    stroke-linejoin: round;
}
.round{stroke-linecap: round}
.w2{stroke-width: 2px}
.w4{stroke-width: 3px}
.w6{stroke-width: 6px}
.w8{stroke-width: 7px}
.w10{stroke-width: 8px}
.w12{stroke-width: 12px}
.w14{stroke-width: 14px}
.w16{stroke-width: 16px}
#route{
    fill: none;
    stroke: #fc6018;
    stroke-width: 9px;
    stroke-linecap: round;
    stroke-linejoin: round;
    filter: drop-shadow(0 0 2px #ffffff) drop-shadow(0 0 1px #ffffff);
}
.hidden-part{
    fill: none;
    stroke: #544b45;
    stroke-width: 11px;
    stroke-linecap: round;
    stroke-linejoin: round;
}
.road-name{
    fill: #6b625d;
    stroke: #f4f4f2;
    stroke-width: 4px;
    paint-order: stroke;
    font-size: 21px;
}
.privacy{
    position: absolute;
    left: 48px;
    top: 48px;
    padding: 0 12px;
    border-radius: 6px;
    background: #ffffff;
    font-size: 33px;
    font-weight: 700;
    line-height: 51px;
}
.credit{
    position: absolute;
    left: 74px;
    bottom: 7px;
    color: #ffffff;
    font-size: 20px;
    line-height: 26px;
    opacity: .8;
}
.credit.tiny{
    left: 48px;
    bottom: 2px;
    font-size: 13px;
    line-height: 18px;
}

/* activity card */
.activity{
    padding: 72px;
    border-top: 9px solid #f2f2f0;
}
.athlete{
    display: flex;
    gap: 36px;
}
.athlete h2{
    font-size: 38px;
    line-height: 54px;
}
.athlete p{
    color: #484844;
    font-size: 33px;
    line-height: 56px;
}
.athlete h2 + p{margin-top: 3px}
.athlete .place{
    display: flex;
    align-items: center;
    gap: 12px;
}
.shoe{
    width: 46px;
    height: 44px;
    fill: none;
    stroke: #000000;
    stroke-width: 4;
    stroke-linejoin: round;
}
.activity h3{
    margin-top: 75px;
    font-size: 61px;
    line-height: 72px;
}
.stats{
    display: flex;
    gap: 72px;
    margin-top: 47px;
}
.stats dt{
    color: #484844;
    font-size: 33px;
    line-height: 56px;
}
.stats dd{
    font-size: 51px;
    font-weight: 700;
    line-height: 70px;
}
.achievements{
    margin-left: auto;
    text-align: right;
}
.achievements dd{
    display: flex;
    align-items: center;
    justify-content: flex-end;
    gap: 8px;
}
.medal{
    width: 44px;
    height: 48px;
    fill: none;
    stroke: #8b9697;
    stroke-width: 4;
}
.medal circle{
    fill: #8b9697;
    stroke: none;
}

.reactions{
    display: flex;
    padding: 79px 0 29px;
}
.reactions > button{flex: 1}
.reactions .icon{margin: 0 auto}

/* bottom navigation */
.tab-bar{
    position: sticky;
    bottom: 0;
    display: flex;
    padding: 13px 0 95px;
    background: #ffffff;
    box-shadow: 0 -2px 10px rgba(0, 0, 0, .12);
}
.tab-bar > a{
    flex: 1;
    display: flex;
    flex-direction: column;
    align-items: center;
    gap: 9px;
    font-size: 33px;
    font-weight: 700;
    line-height: 46px;
}
.tab-bar > a.active{color: #fc5200}
```
